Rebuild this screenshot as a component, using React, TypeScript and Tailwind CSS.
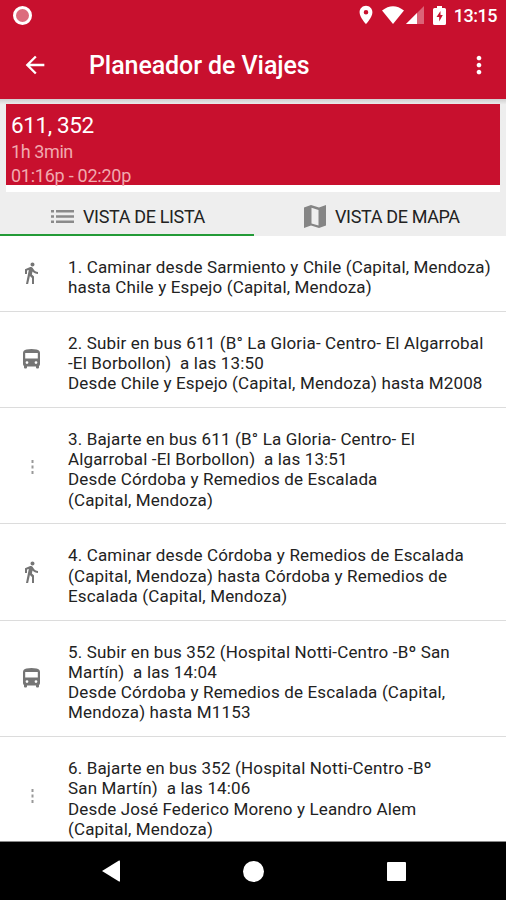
import { MdArrowBack, MdDirectionsWalk, MdLocationOn, MdMoreVert } from "react-icons/md";

type Step = {
  type: "walk" | "bus" | "stop";
  lines: string[];
};

const steps: Step[] = [
  {
    type: "walk",
    lines: [
      "1. Caminar desde Sarmiento y Chile (Capital, Mendoza)",
      "hasta Chile y Espejo (Capital, Mendoza)",
    ],
  },
  {
    type: "bus",
    lines: [
      "2. Subir en bus 611 (B° La Gloria- Centro- El Algarrobal",
      "-El Borbollon)  a las 13:50",
      "Desde Chile y Espejo (Capital, Mendoza) hasta M2008",
    ],
  },
  {
    type: "stop",
    lines: [
      "3. Bajarte en bus 611 (B° La Gloria- Centro- El",
      "Algarrobal -El Borbollon)  a las 13:51",
      "Desde Córdoba y Remedios de Escalada",
      "(Capital, Mendoza)",
    ],
  },
  {
    type: "walk",
    lines: [
      "4. Caminar desde Córdoba y Remedios de Escalada",
      "(Capital, Mendoza) hasta Córdoba y Remedios de",
      "Escalada (Capital, Mendoza)",
    ],
  },
  {
    type: "bus",
    lines: [
      "5. Subir en bus 352 (Hospital Notti-Centro -Bº San",
      "Martín)  a las 14:04",
      "Desde Córdoba y Remedios de Escalada (Capital,",
      "Mendoza) hasta M1153",
    ],
  },
  {
    type: "stop",
    lines: [
      "6. Bajarte en bus 352 (Hospital Notti-Centro -Bº",
      "San Martín)  a las 14:06",
      "Desde José Federico Moreno y Leandro Alem",
      "(Capital, Mendoza)",
    ],
  },
];

function StatusBar() {
  return (
    <div className="flex h-[30px] items-center justify-between pl-[13px] pr-[9px]">
      <div className="h-[19px] w-[19px] rounded-full border-[3.5px] border-white bg-[#dc6b7d]" />

      <div className="flex items-center text-white">
        <MdLocationOn className="mr-[5px] h-[22px] w-[22px]" />
        <svg className="h-[18px] w-[22px]" viewBox="0 0 22 18">
          <path d="M0 4.5Q11-4 22 4.5L11 18z" fill="currentColor" />
        </svg>
        <svg className="ml-[2px] h-[18px] w-[18px]" viewBox="0 0 18 18">
          <path d="M0 18L18 0v18z" fill="currentColor" opacity=".35" />
          <path d="M0 18L11 7v11z" fill="currentColor" />
        </svg>
        <svg className="ml-[9px] h-[19px] w-[13px]" viewBox="0 0 13 19">
          <path d="M4 0h5v2h2.5Q13 2 13 3.5v14q0 1.500-1.500 1.500h-10Q0 19 0 17.500v-14Q0 2 1.500 2H4z" fill="currentColor" />
          <path d="M7.500 5L3.500 11h2.700v4.500L9.800 9H7.500z" fill="#c8102e" />
        </svg>
        <span className="ml-[8px] pt-[2px] text-[18px] leading-[28px] font-medium tracking-[-0.5px]">13:15</span>
      </div>
    </div>
  );
}

function BusIcon() {
  return (
    <svg className="ml-1 h-[20px] w-[17px]" viewBox="0 0 17 20">
      <path
        fill="currentColor"
        fillRule="evenodd"
        d="M3.500.500Q8.500-.500 13.500.500 17 1 17 4v11q0 1.500-1 2v1.500q0 1-1 1h-1q-1 0-1-1V17.500H4v1q0 1-1 1H2q-1 0-1-1V17q-1-.500-1-2V4Q0 1 3.500.500zM2.200 4v5.500h12.600V4zM4 12.200a1.400 1.400 0 1 0 0 2.800 1.400 1.400 0 0 0 0-2.800zM13 12.200a1.400 1.400 0 1 0 0 2.800 1.400 1.400 0 0 0 0-2.800z"
      />
    </svg>
  );
}

function StepIcon({ type }: { type: Step["type"] }) {
  if (type === "walk") {
    return <MdDirectionsWalk className="h-6 w-6" />;
  }

  if (type === "bus") {
    return <BusIcon />;
  }

  return (
    <svg className="mt-[3px] ml-[12px] h-[14px] w-[3px]" viewBox="0 0 3 14">
      <path d="M.5 0h2v3h-2zM.5 5.500h2v3h-2zM.5 11h2v3h-2z" fill="#999" />
    </svg>
  );
}

function App() {
  return (
    <div className="flex h-[900px] w-[506px] flex-col overflow-hidden bg-white font-[Roboto,sans-serif]">
      <header className="h-[99px] shrink-0 bg-[#c8102e] text-white">
        <StatusBar />
        <div className="flex h-[69px] items-center pl-[21px] pr-[13px]">
          <MdArrowBack className="h-[28px] w-[28px]" />
          <h1 className="ml-10 flex-1 pt-[2px] text-[25px] leading-[30px] font-medium tracking-[-0.08px] whitespace-nowrap">Planeador de Viajes</h1>
          <MdMoreVert className="h-[28px] w-[28px]" />
        </div>
      </header>

      <section className="h-[93px] shrink-0 bg-[#eee] bg-linear-to-b from-[#cfcfcf] from-0% to-[#eee] to-6% px-[6px] pt-[5px]">
        <div className="h-[88px] bg-white">
          <div className="h-[81px] bg-[#c8102e] px-[5px] text-[#f1a9af]">
            <p className="pt-[7px] text-[22.500px] leading-[29px] tracking-[-0.4px] text-white">611, 352</p>
            <p className="text-[18px] leading-6 tracking-[-0.4px]">1h 3min</p>
            <p className="text-[18px] leading-[23px] tracking-[-0.250px]">01:16p - 02:20p</p>
          </div>
        </div>
      </section>

      <nav className="flex h-11 shrink-0 bg-[#eee] text-[18px] tracking-[-0.350px] text-[#222]">
        <div className="flex w-[254px] items-center border-b-2 border-[#239b37] pt-[6px] pl-[51px]">
          <svg className="h-[13px] w-[23px]" viewBox="0 0 23 13" fill="#8a8a8a">
            <path d="M0 0h3v2.500H0zM5 0h18v2.500H5zM0 5.250h3v2.500H0zM5 5.250h18v2.500H5zM0 10.500h3V13H0zM5 10.500h18V13H5z" />
          </svg>
          <span className="ml-[9px]">VISTA DE LISTA</span>
        </div>
        <div className="flex flex-1 items-center pt-[5px] pl-[50px]">
          <svg className="h-[23px] w-[22px]" viewBox="0 0 22 23" fill="#858585">
            <path fillRule="evenodd" d="M0 2.500L7 0l8 2.500L22 0v20.500L15 23l-8-2.500L0 23zM7.500 2.700v15.800l7 2.100V4.900z" />
          </svg>
          <span className="ml-[9px]">VISTA DE MAPA</span>
        </div>
      </nav>

      <main className="flex-1 overflow-hidden border-b border-[#888]">
        {steps.map((step, index) => (
          <div key={index} className="flex border-b border-[#dcdcdc] first:h-[75.500px]">
            <div className="flex w-[68px] items-center pl-[19px] text-[#757575]">
              <StepIcon type={step.type} />
            </div>
            <div className="pt-[21px] pb-[13.500px] text-[17px] leading-[20.250px] tracking-[0.150px] text-[#222]">
              {step.lines.map((line) => (
                <p key={line} className="whitespace-pre">{line}</p>
              ))}
            </div>
          </div>
        ))}
      </main>

      <footer className="flex h-[58px] shrink-0 items-center bg-black">
        <svg className="ml-[102px] h-[22px] w-[18px]" viewBox="0 0 18 22">
          <path d="M0 11L17 .5Q18 0 18 1.500v19Q18 22 17 21.500z" fill="#fff" />
        </svg>
        <div className="ml-[123px] h-[21px] w-[21px] rounded-full bg-white" />
        <div className="ml-[123px] h-[19px] w-[19px] rounded-[1px] bg-white" />
      </footer>
    </div>
  );
}

export default App;
